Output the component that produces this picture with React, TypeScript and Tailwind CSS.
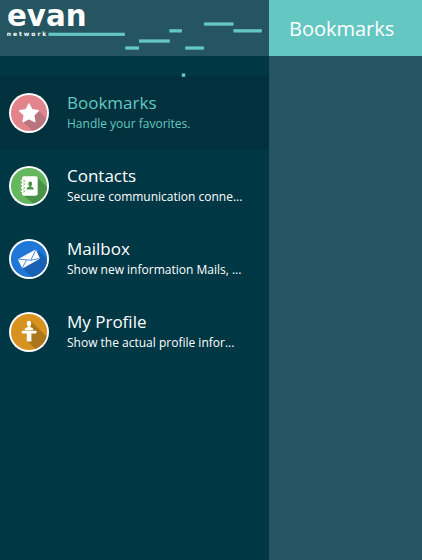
import React from "react";

type Kind = "star" | "contacts" | "mail" | "profile";

interface Entry {
  kind: Kind;
  title: string;
  text: string;
  color: string;
  shade: string;
  active?: boolean;
}

const entries: Entry[] = [
  { kind: "star", title: "Bookmarks", text: "Handle your favorites.", color: "#e3848c", shade: "#b9747e", active: true },
  { kind: "contacts", title: "Contacts", text: "Secure communication conne...", color: "#64b75d", shade: "#4b9147" },
  { kind: "mail", title: "Mailbox", text: "Show new information Mails, ...", color: "#1f78d8", shade: "#1961b2" },
  { kind: "profile", title: "My Profile", text: "Show the actual profile infor...", color: "#d8921f", shade: "#ac761c" },
];

const shadows: Record<Kind, string> = {
  star: "M29 17 L45 33 L32 45 L14 29 L20 25Z",
  contacts: "M28 11 L46 29 L34 46 L14 29 L28 29Z",
  mail: "M30 12 L46 28 L32 46 L13 29Z",
  profile: "M22 9 L46 33 L36 46 L18 29 L22 22Z",
};

function Glyph({ kind, color }: { kind: Kind; color: string }) {
  if (kind === "star")
    return (
      <path
        d="M20 11 L22.9 16.8 L29.3 17.7 L24.7 22.2 L25.8 28.7 L20 25.7 L14.2 28.7 L15.3 22.2 L10.7 17.7 L17.1 16.8Z"
        fill="#fff"
        stroke="#fff"
        strokeWidth="1.4"
        strokeLinejoin="round"
      />
    );
  if (kind === "contacts")
    return (
      <g>
        <rect x="13" y="10.3" width="15.7" height="19.4" rx="2" fill="#fff" />
        {[14.8, 18.3, 21.8, 25.3].map((y) => (
          <g key={y}>
            <circle cx="14.8" cy={y} r="1.1" fill={color} />
            <rect x="11.6" y={y - 0.7} width="3.3" height="1.3" rx=".6" fill="#fff" />
          </g>
        ))}
        <ellipse cx="21.2" cy="18" rx="1.9" ry="2.4" fill="#4b9147" />
        <path d="M20.3 19h1.8v1.8c1.7.5 2.6.8 2.6 2.6h-7c0-1.8 1-2.1 2.6-2.6z" fill="#4b9147" />
      </g>
    );
  if (kind === "mail")
    return (
      <g>
        <path d="M9.5 20.5 L26.5 11 L30.5 19.5 L13.5 29Z" fill="#fff" stroke="#fff" strokeWidth="1" strokeLinejoin="round" />
        <path d="M9.5 20.2 L21.8 21.2 L26.8 11 M13.4 29 L17.4 21.1 M22 21.2 L30.5 19.5" fill="none" stroke="#1f70c6" strokeWidth=".8" />
      </g>
    );
  return (
    <g fill="#fff">
      <ellipse cx="20" cy="11.5" rx="2.2" ry="2.8" />
      <path d="M19 13h2v2c2 .5 3.3.9 3.3 3.2h-8.6c0-2.3 1.3-2.7 3.3-3.2z" />
      <rect x="12.8" y="18.8" width="14.6" height="2.6" rx=".4" />
      <rect x="17.8" y="21" width="4.6" height="8.6" rx=".6" />
    </g>
  );
}

function Badge({ entry }: { entry: Entry }) {
  return (
    <svg className="size-10 shrink-0" viewBox="0 0 40 40">
      <defs>
        <clipPath id={entry.kind}>
          <circle cx="20" cy="20" r="18.1" />
        </clipPath>
      </defs>
      <circle cx="20" cy="20" r="20" fill="#fff" />
      <circle cx="20" cy="20" r="18.1" fill={entry.color} />
      <path d={shadows[entry.kind]} fill={entry.shade} clipPath={`url(#${entry.kind})`} />
      <Glyph kind={entry.kind} color={entry.color} />
    </svg>
  );
}

function Logo() {
  return (
    <svg className="absolute left-0 top-0" width="269" height="80" viewBox="0 0 269 80">
      <text x="7" y="25.5" textLength="79.5" lengthAdjust="spacingAndGlyphs" fill="#fff" fontSize="30" fontWeight="700" fontFamily="'DejaVu Sans', sans-serif">
        evan
      </text>
      <text x="6.8" y="36" textLength="39.5" fill="#fff" fontSize="6" fontWeight="700" fontFamily="'DejaVu Sans', sans-serif">
        network
      </text>
      <g fill="#65c7c2">
        <rect x="48.4" y="32.7" width="76.5" height="3.2" />
        <rect x="125.2" y="46.4" width="13.8" height="3.3" />
        <rect x="139" y="39.4" width="30.8" height="3.3" />
        <rect x="169.3" y="29.2" width="12.6" height="3.3" />
        <rect x="185.2" y="46.4" width="18.7" height="3.3" />
        <rect x="204.1" y="22.4" width="29.4" height="3.3" />
        <rect x="233.4" y="29.2" width="28.4" height="3.3" />
        <rect x="181.8" y="73.4" width="3.4" height="3.4" />
      </g>
    </svg>
  );
}

export default function App() {
  return (
    <div className="flex h-[560px] w-[422px] overflow-hidden bg-[#245560] font-['Open_Sans',sans-serif] text-white">
      <aside className="relative w-[269px] shrink-0 bg-[#003745]">
        <header className="h-14 bg-[#245560]" />
        <nav className="pt-5">
          {entries.map((entry) => (
            <div
              key={entry.kind}
              className={`flex h-[73px] items-center pl-[9px] ${entry.active ? "bg-[#00313d] text-[#65c7c2]" : ""}`}
            >
              <Badge entry={entry} />
              <div className="ml-[18px] whitespace-nowrap">
                <div className="pb-0.5 text-[17px] leading-[21px]">{entry.title}</div>
                <div className="text-[12px] leading-[18px]">{entry.text}</div>
              </div>
            </div>
          ))}
        </nav>
        <Logo />
      </aside>
      <main className="flex-1">
        <header className="flex h-14 items-center bg-[#65c7c2] pl-5 pt-0.5 text-[20px]">Bookmarks</header>
      </main>
    </div>
  );
}
